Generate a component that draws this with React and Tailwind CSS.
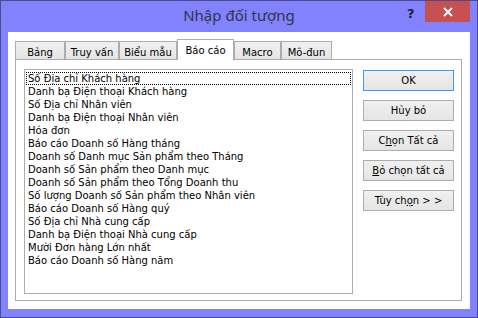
import React from "react";

const font = { fontFamily: '"DejaVu Sans", sans-serif' };

const tabs = [
  { label: "Bảng", w: "w-[50px]" },
  { label: "Truy vấn", w: "w-[54px]" },
  { label: "Biểu mẫu", w: "w-[58px]" },
  { label: "Báo cáo", w: "w-[57px]", active: true },
  { label: "Macro", w: "w-[47px]" },
  { label: "Mô-đun", w: "w-[51px]" },
];

const reports = [
  "Số Địa chỉ Khách hàng",
  "Danh bạ Điện thoại Khách hàng",
  "Số Địa chỉ Nhân viên",
  "Danh bạ Điện thoại Nhân viên",
  "Hóa đơn",
  "Báo cáo Doanh số Hàng tháng",
  "Doanh số Danh mục Sản phẩm theo Tháng",
  "Doanh số Sản phẩm theo Danh mục",
  "Doanh số Sản phẩm theo Tổng Doanh thu",
  "Số lượng Doanh số Sản phẩm theo Nhân viên",
  "Báo cáo Doanh số Hàng quý",
  "Số Địa chỉ Nhà cung cấp",
  "Danh bạ Điện thoại Nhà cung cấp",
  "Mười Đơn hàng Lớn nhất",
  "Báo cáo Doanh số Hàng năm",
];

const buttonClass =
  "flex h-[21px] w-[91px] items-center justify-center border bg-gradient-to-b from-[#f0f0f0] to-[#e5e5e5] text-[10px] text-black";

const DialogButton = ({ children, primary }) => (
  <div
    className={
      buttonClass + (primary ? " border-[#3c9af0]" : " border-[#adadad]")
    }
  >
    <span>{children}</span>
  </div>
);

export default function App() {
  return (
    <div
      className="flex h-[318px] w-[478px] flex-col border border-[#4b4b8c] bg-[#8282ff]"
      style={font}
    >
      {/* Title bar */}
      <div className="relative flex h-[31px] shrink-0 items-center justify-center">
        <span
          className="pb-[2px] text-[15px] text-[#333344]"
          style={{ fontFamily: '"Noto Sans", sans-serif' }}
        >
          Nhập đối tượng
        </span>
        <span className="absolute left-[406px] top-[3px] text-[13px] font-bold text-[#222]">
          ?
        </span>
        <div className="absolute left-[424px] top-0 flex h-[21px] w-[45px] items-center justify-center bg-[#c75050]">
          <svg width="10" height="10" viewBox="0 0 10 10">
            <path d="M1 1L9 9M9 1L1 9" stroke="#fff" strokeWidth="1.8" />
          </svg>
        </div>
      </div>

      {/* Client area */}
      <div className="mx-[7px] flex h-[277px] flex-col bg-white px-[7px] pt-[7px]">
        {/* Tabs */}
        <div className="flex h-[20px] items-end">
          {tabs.map((t) =>
            t.active ? (
              <div
                key={t.label}
                className={`${t.w} relative z-10 -mb-px flex h-[21px] items-start justify-center border border-b-0 border-[#acacac] bg-white pt-[3px] text-[10px] text-black`}
              >
                {t.label}
              </div>
            ) : (
              <div
                key={t.label}
                className={`${t.w} flex h-[18px] items-start justify-center border border-b-0 border-[#acacac] bg-gradient-to-b from-[#f0f0f0] to-[#e5e5e5] pt-[3px] text-[10px] text-black`}
              >
                {t.label}
              </div>
            )
          )}
        </div>

        {/* Panel */}
        <div className="flex h-[242px] w-[447px] border border-[#acacac] pl-[8px] pt-[9px]">
          <div className="h-[225px] w-[329px] border border-[#abadb3] pl-px pr-px pt-[2px]">
            {reports.map((r, i) => (
              <div
                key={r}
                className={
                  "flex h-[13px] items-center pl-[2px] text-[10px] leading-none text-black " +
                  (i === 0 ? "border border-dotted border-black pl-px" : "")
                }
              >
                {r}
              </div>
            ))}
          </div>

          <div className="ml-[10px] flex flex-col gap-[9px] pt-px">
            <DialogButton primary>OK</DialogButton>
            <DialogButton>Hủy bỏ</DialogButton>
            <DialogButton>
              C<span className="underline">h</span>ọn Tất cả
            </DialogButton>
            <DialogButton>
              <span className="underline">B</span>ỏ chọn tất cả
            </DialogButton>
            <DialogButton>
              Tùy ch<span className="underline">ọ</span>n &gt; &gt;
            </DialogButton>
          </div>
        </div>
      </div>
    </div>
  );
}
